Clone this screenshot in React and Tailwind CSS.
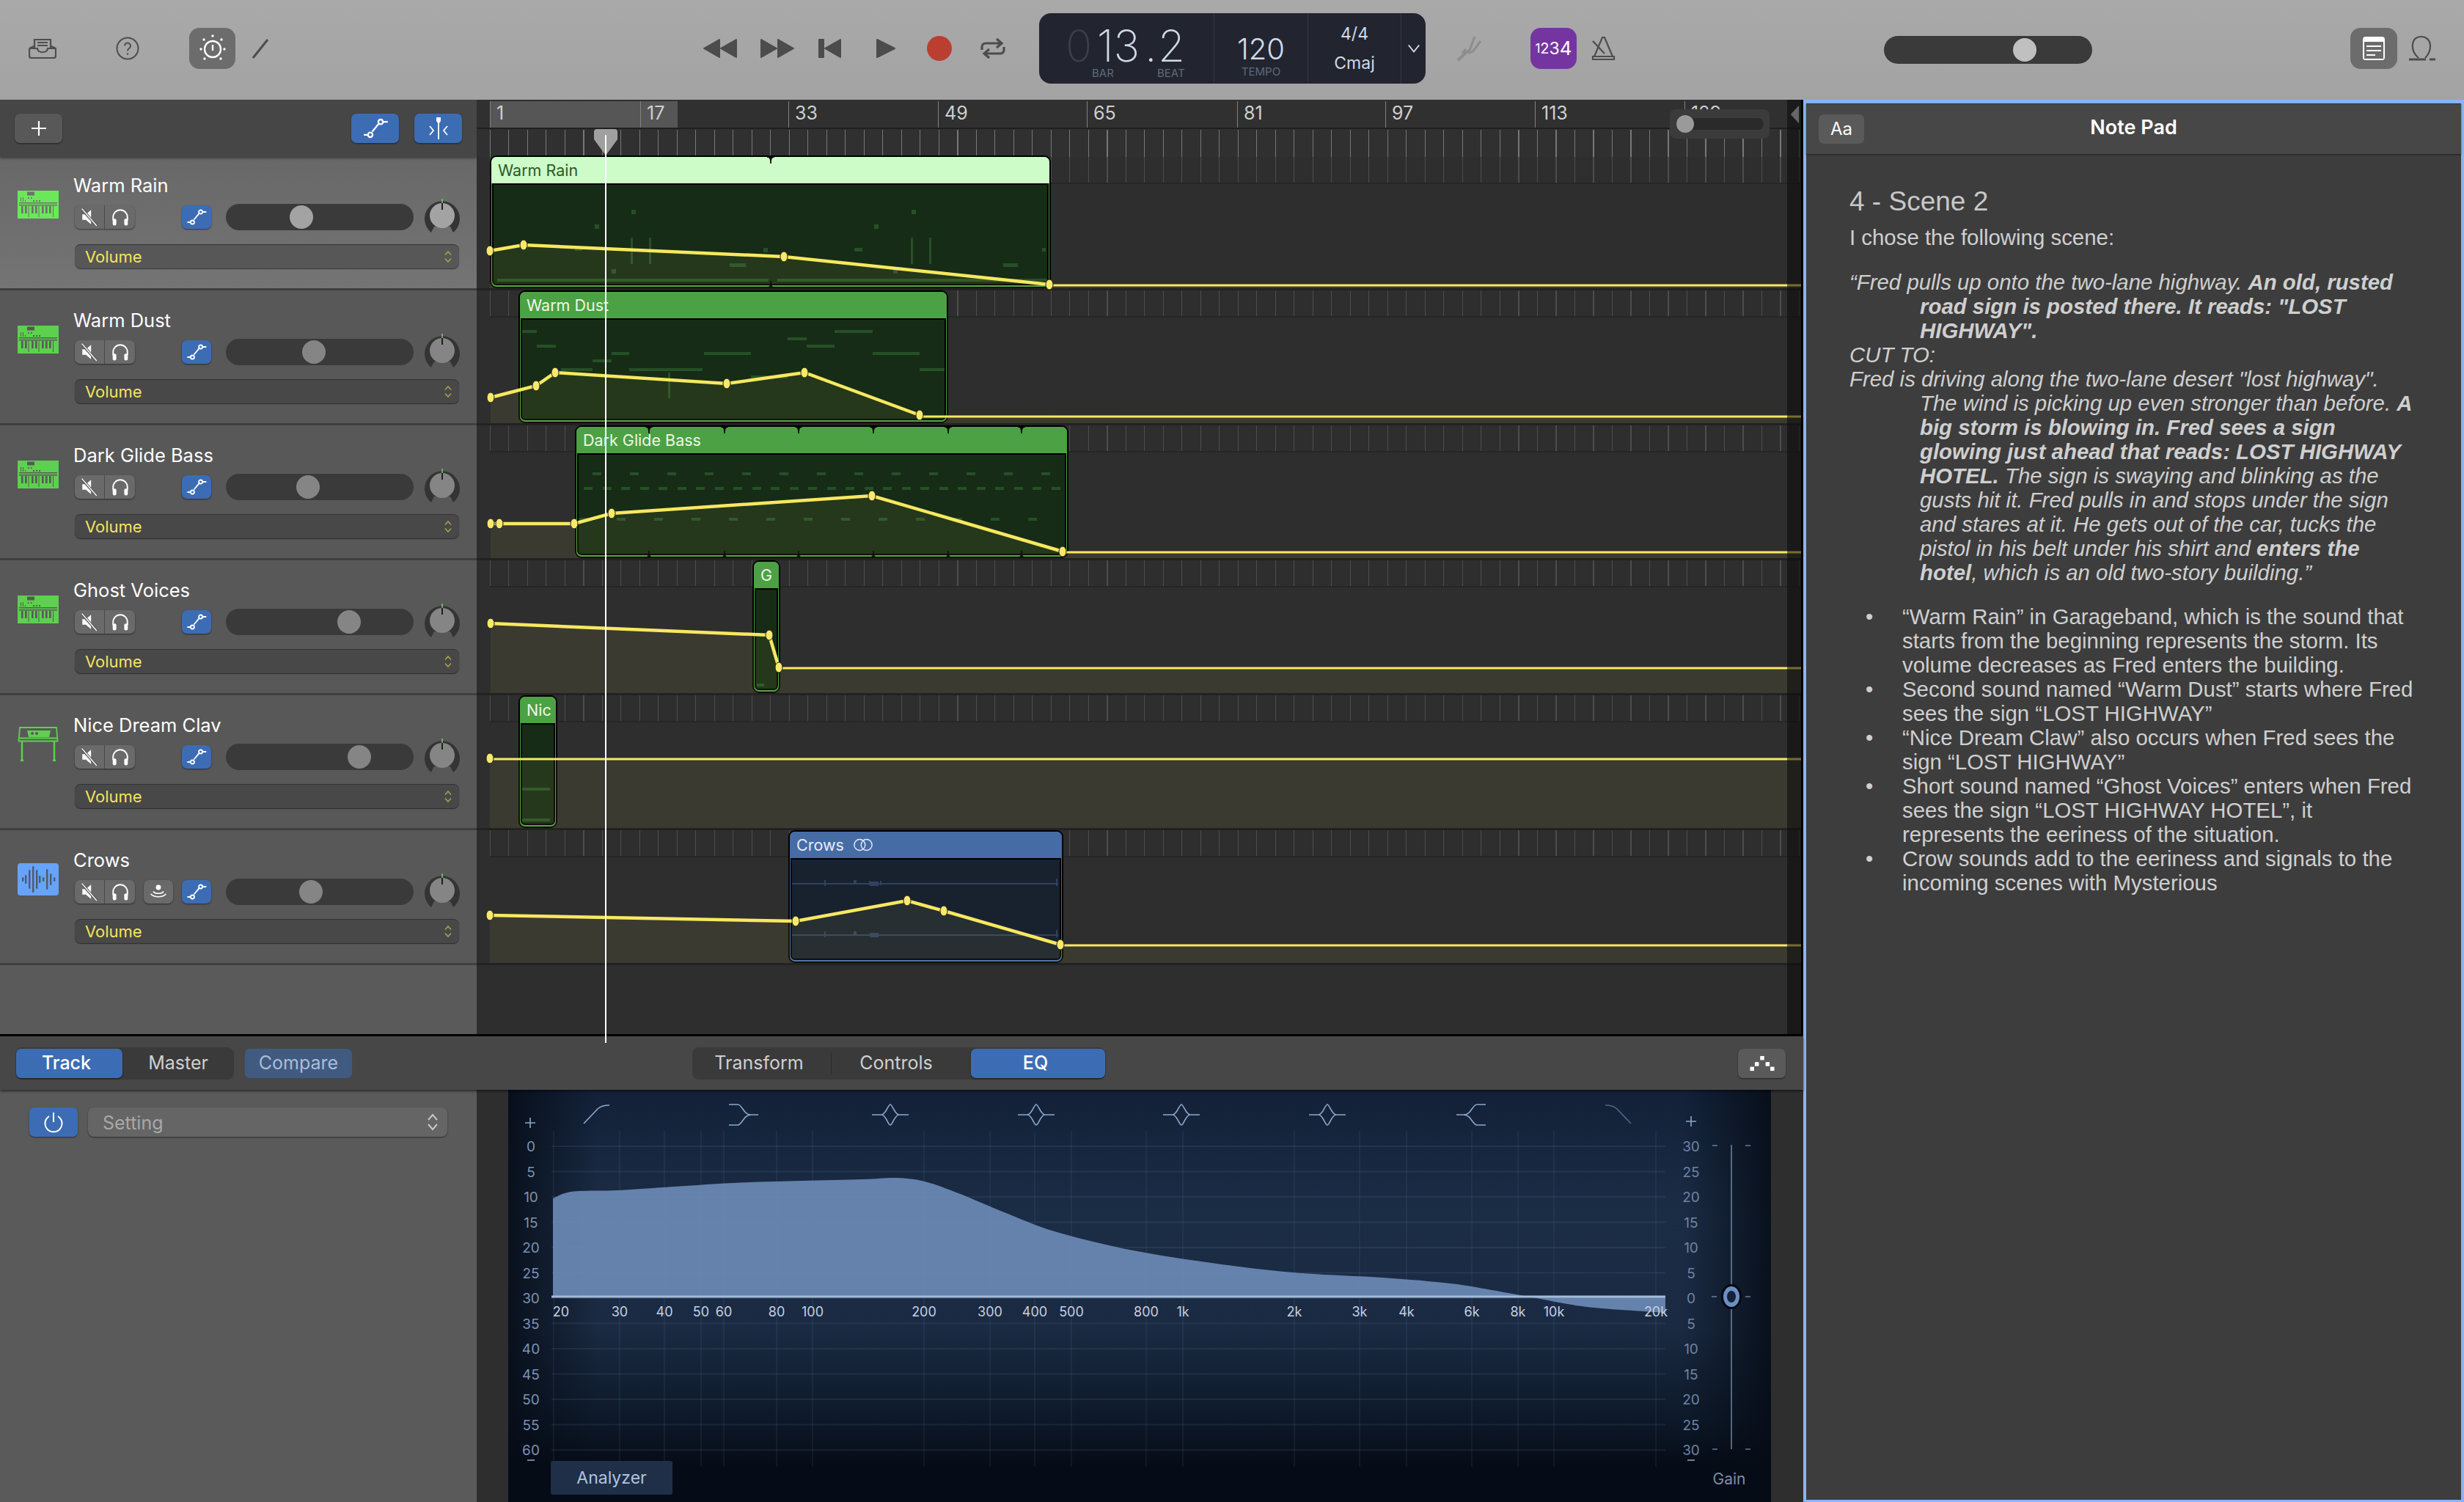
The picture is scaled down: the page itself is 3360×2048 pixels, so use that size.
import React from "react";

const SF = "[font-family:Inter,sans-serif]";
const ARIAL = "[font-family:'Liberation_Sans',Arial,sans-serif]";

/* ---------- icons ---------- */
const AutoIcon = ({ c = "w-[28px] h-[24px]" }) => (
  <svg viewBox="0 0 40 34" className={c} fill="none" stroke="#fff" strokeWidth="2.6">
    <path d="M2 27H9M15 22L25 10M31 7H39" />
    <circle cx="12" cy="27" r="3.6" />
    <circle cx="28" cy="7" r="3.6" />
  </svg>
);
const MuteIcon = () => (
  <svg viewBox="0 0 24 24" className="w-[26px] h-[26px]">
    <path d="M3 8.500h4.500L14 3v18l-6.500-5.500H3z" fill="#fff" />
    <path d="M3 2.500L21 23" stroke="#595959" strokeWidth="3.4" />
    <path d="M2.500 1.500L21 23" stroke="#fff" strokeWidth="1.3" />
  </svg>
);
const PhoneIcon = () => (
  <svg viewBox="0 0 24 24" className="w-[26px] h-[26px]" fill="none">
    <path d="M3 16v-4a9 9 0 0 1 18 0v4" stroke="#fff" strokeWidth="1.8" />
    <rect x="2.500" y="14" width="4.500" height="8.500" rx="2" fill="#fff" />
    <rect x="17" y="14" width="4.500" height="8.500" rx="2" fill="#fff" />
  </svg>
);
const MonitorIcon = () => (
  <svg viewBox="0 0 24 24" className="w-[26px] h-[26px]" fill="none" stroke="#fff" strokeWidth="1.5">
    <circle cx="12" cy="6.500" r="3.200" fill="#fff" stroke="none" />
    <path d="M5.500 11.500c2.500 3.500 10.500 3.500 13 0M2.500 14.500c4 5 15 5 19 0" />
  </svg>
);
const Synth = ({ bright }) => {
  const f = bright ? "#6be85a" : "#5ed04f";
  const d = bright ? "#6f6f6f" : "#585858";
  return (
    <svg viewBox="0 0 56 38" className="w-[56px] h-[38px]">
      <rect width="56" height="38" fill={f} />
      <rect x="13" y="1.500" width="10" height="5" fill={d} />
      <path d="M4 9h1v6H4zM7 9h1v6H7zM10 13h1v2h-1zM14 9h1.500v2H14zM18 9h1.500v2H18zM21 13h2v2h-2zM25 13h2v2h-2zM29 13h2v2h-2z" fill={d} />
      <rect x="2" y="16" width="52" height="1.500" fill={d} />
      <rect x="2" y="19" width="52" height="1.500" fill={d} />
      {[5, 10, 19, 24, 33, 38, 43].map((x) => (
        <rect key={x} x={x} y="21" width="2.600" height="10" fill={d} />
      ))}
      {[14.500, 28.500, 48].map((x) => (
        <rect key={x} x={x} y="21" width="1" height="15" fill={d} />
      ))}
    </svg>
  );
};
const Clav = () => (
  <svg viewBox="0 0 56 48" className="w-[56px] h-[48px] -mt-[6px]" fill="none" stroke="#5ed04f" strokeWidth="1.800">
    <path d="M1.500 20.500L3 2h50l1.500 18.500z" />
    <path d="M2 16.500h52" />
    <path d="M13 6h32l-2 9H15z" fill="#5ed04f" stroke="none" />
    <circle cx="20" cy="10" r="2" fill="#585858" stroke="none" />
    <circle cx="26" cy="10" r="2" fill="#585858" stroke="none" />
    <path d="M6 21v26M50 21v26M4 47h4M48 47h4" strokeWidth="2.400" />
  </svg>
);
const Wave = () => (
  <svg viewBox="0 0 56 44" className="w-[56px] h-[44px] -mt-[3px]">
    <rect width="56" height="44" rx="4" fill="#66a3fa" />
    {[[7, 3], [11, 6], [16, 13], [21, 18], [26, 13], [30, 5], [35, 3], [40, 14], [45, 8], [50, 3]].map(([x, h]) => (
      <rect key={x} x={x - 1} y={22 - h} width="2.400" height={h * 2} rx="1.200" fill="#4e5a6b" />
    ))}
  </svg>
);
const Knob = ({ fill }) => (
  <svg viewBox="0 0 50 56" className="w-[50px] h-[56px]">
    <path d="M10 49A24 24 0 1 1 40 49L36 41H14z" fill="#343434" />
    <circle cx="25" cy="26" r="17" fill={fill} />
    <path d="M25 3v6" stroke="#6fd66a" strokeWidth="1.500" />
    <path d="M25 9v9" stroke="#111" strokeWidth="1.800" />
  </svg>
);

/* ---------- data ---------- */
const tracks = [
  { name: "Warm Rain", thumb: 411, icon: "synth", sel: true },
  { name: "Warm Dust", thumb: 428, icon: "synth" },
  { name: "Dark Glide Bass", thumb: 420, icon: "synth" },
  { name: "Ghost Voices", thumb: 476, icon: "synth" },
  { name: "Nice Dream Clav", thumb: 490, icon: "clav" },
  { name: "Crows", thumb: 424, icon: "wave", audio: true },
];

const rulerBars = [
  ["1", 668], ["17", 873], ["33", 1075], ["49", 1279], ["65", 1482], ["81", 1687], ["97", 1889], ["113", 2093], ["129", 2297],
];

const range = (n, fn) => Array.from({ length: n }, (_, i) => fn(i));

const regions = [
  {
    name: "Warm Rain", x: 668, y: 212, w: 765, h: 181, sel: true,
    notes: [[861, 286, 6, 6], [811, 306, 6, 6], [784, 338, 10, 4], [860, 324, 3, 36], [885, 324, 3, 36], [834, 367, 6, 6], [995, 359, 22, 5], [1041, 338, 6, 6], [1243, 286, 6, 6], [1192, 306, 6, 6], [1165, 338, 11, 5], [1242, 324, 3, 36], [1267, 324, 3, 36], [1218, 367, 6, 6], [1368, 359, 20, 5], [1421, 338, 5, 5], [678, 380, 370, 4], [1060, 380, 368, 4]],
  },
  {
    name: "Warm Dust", x: 707, y: 396, w: 586, h: 181,
    notes: [[712, 450, 20, 4], [732, 470, 26, 4], [834, 480, 24, 4], [808, 490, 26, 4], [765, 502, 43, 4], [858, 502, 100, 4], [960, 480, 64, 4], [1074, 460, 26, 4], [1100, 470, 38, 4], [1138, 450, 52, 4], [1190, 480, 64, 4], [1254, 502, 34, 4], [1024, 512, 50, 4], [911, 508, 3, 35]],
  },
  {
    name: "Dark Glide Bass", x: 784, y: 580, w: 673, h: 181,
    notes: [
      ...range(13, (i) => [808 + i * 51, 644, 12, 4]),
      ...range(26, (i) => [796 + i * 25.500, 664, 12, 4]),
      ...range(13, (i) => [790 + i * 51, 706, 12, 4]),
    ],
  },
  { name: "G", x: 1026, y: 764, w: 38, h: 181, notes: [[1032, 932, 10, 4]] },
  { name: "Nic", x: 707, y: 948, w: 53, h: 181, notes: [[712, 1074, 38, 4], [712, 1116, 38, 4]] },
  {
    name: "Crows", x: 1075, y: 1132, w: 375, h: 181, audio: true,
    notes: [[1080, 1204, 363, 2], [1080, 1274, 363, 2], [1124, 1200, 2, 8], [1164, 1200, 4, 6], [1185, 1201, 2, 6], [1186, 1202, 12, 6], [1200, 1201, 2, 6], [1440, 1198, 2, 10], [1124, 1270, 2, 8], [1164, 1270, 4, 6], [1186, 1272, 12, 6], [1440, 1268, 2, 10]],
  },
];

const END = 2456;
const autos = [
  { bottom: 393, tail: 389, pts: [[668, 342], [714, 334], [1069, 350], [1431, 388]] },
  { bottom: 577, tail: 568, pts: [[669, 542], [731, 526], [757, 508], [991, 523], [1097, 508], [1254, 566]] },
  { bottom: 761, tail: 753, pts: [[669, 714], [681, 714], [783, 714], [834, 700], [1189, 676], [1449, 752]] },
  { bottom: 945, tail: 911, pts: [[669, 850], [1049, 866], [1062, 910]] },
  { bottom: 1129, tail: 1035, pts: [[668, 1034]] },
  { bottom: 1313, tail: 1289, pts: [[668, 1248], [1085, 1256], [1237, 1228], [1287, 1242], [1446, 1288]] },
];

const notches = [
  [1051, 214, 1], [1051, 392, -1],
  ...[885, 988, 1089, 1191, 1293, 1393].flatMap((x) => [[x, 582, 1], [x, 760, -1]]),
];

const freqs = [
  ["20", 755], ["30", 845], ["40", 906], ["50", 956], ["60", 987], ["80", 1059], ["100", 1108], ["200", 1260], ["300", 1350], ["400", 1411], ["500", 1461], ["800", 1563], ["1k", 1613], ["2k", 1765], ["3k", 1854], ["4k", 1918], ["6k", 2007], ["8k", 2070], ["10k", 2119], ["20k", 2258],
];

/* the EQ response, smoothed through its measured points */
const eqPts = [[754, 1634], [770, 1627], [790, 1624], [842, 1623], [905, 1619], [1000, 1613], [1093, 1610], [1177, 1608], [1223, 1606], [1261, 1611], [1307, 1627], [1372, 1654], [1438, 1679], [1540, 1704], [1652, 1722], [1763, 1735], [1885, 1742], [1978, 1750], [2034, 1759], [2085, 1768], [2164, 1782], [2271, 1790]];
function smoothArea(pts, base) {
  let d = `M${pts[0][0]} ${pts[0][1]}`;
  for (let i = 0; i < pts.length - 1; i++) {
    const p0 = pts[Math.max(0, i - 1)];
    const p1 = pts[i];
    const p2 = pts[i + 1];
    const p3 = pts[Math.min(pts.length - 1, i + 2)];
    const c1x = p1[0] + (p2[0] - p0[0]) / 6;
    const c1y = p1[1] + (p2[1] - p0[1]) / 6;
    const c2x = p2[0] - (p3[0] - p1[0]) / 6;
    const c2y = p2[1] - (p3[1] - p1[1]) / 6;
    d += `C${c1x} ${c1y} ${c2x} ${c2y} ${p2[0]} ${p2[1]}`;
  }
  return d + `V${base}H${pts[0][0]}Z`;
}
const eqCurve = smoothArea(eqPts, 1768);

/* ---------- pieces ---------- */
function TrackRow({ t, i }) {
  const rowBg = t.sel ? "bg-[linear-gradient(to_bottom,#686868,#747474)]" : "bg-[#585858]";
  return (
    <div className={`${rowBg} ${i === 0 ? "h-[182px] pt-[23px]" : "h-[184px] pt-[25px]"} border-b-[3px] border-[#3f3f3f] flex`}>
      <div className="w-[100px] pl-[24px] pt-[23px] shrink-0">
        {t.icon === "synth" && <Synth bright={t.sel} />}
        {t.icon === "clav" && <Clav />}
        {t.icon === "wave" && <Wave />}
      </div>
      <div className="w-[526px]">
        <div className={`h-[32px] leading-[32px] text-[25.5px] text-white ${SF}`}>{t.name}</div>
        <div className="h-[32px] mt-[11px] pl-[2px] flex items-center">
          <div className="w-[82px] h-[32px] shrink-0 flex rounded-[7px] bg-[#6a6a6a] shadow-[0_1px_2px_rgba(0,0,0,.5)] overflow-hidden">
            <div className="w-[41px] flex items-center justify-center border-r border-[#4a4a4a]"><MuteIcon /></div>
            <div className="w-[41px] flex items-center justify-center"><PhoneIcon /></div>
          </div>
          {t.audio ? (
            <div className="ml-[12px] w-[40px] h-[32px] shrink-0 rounded-[7px] bg-[#6a6a6a] flex items-center justify-center shadow-[0_1px_2px_rgba(0,0,0,.5)]"><MonitorIcon /></div>
          ) : (
            <div className="ml-[12px] w-[40px] shrink-0" />
          )}
          <div className="ml-[12px] w-[40px] h-[32px] shrink-0 rounded-[7px] bg-[#3c6db4] flex items-center justify-center shadow-[0_1px_2px_rgba(0,0,0,.5)]"><AutoIcon /></div>
          <div className="relative ml-[20px] w-[256px] h-[36px] shrink-0 rounded-full bg-[#3a3a3a]">
            <div
              className={`absolute top-[2px] w-[32px] h-[32px] rounded-full ${t.sel ? "bg-[#a3a3a3]" : "bg-[#858585]"}`}
              style={{ left: t.thumb - 308 - 16 }}
            />
          </div>
          <div className="ml-[14px] -mt-[1px] shrink-0"><Knob fill={t.sel ? "#a3a3a3" : "#858585"} /></div>
        </div>
        <div className={`mt-[21px] ml-[2px] h-[33px] rounded-[8px] ${t.sel ? "bg-[#575757]" : "bg-[#484848]"} border-t border-[#333] shadow-[0_1px_1px_rgba(0,0,0,.5)] flex items-center justify-between pl-[14px] pr-[10px]`}>
          <span className={`text-[22px] text-[#f5e35f] ${SF}`}>Volume</span>
          <svg viewBox="0 0 10 18" className="w-[10px] h-[18px]" fill="none" stroke="#a99f4e" strokeWidth="1.600">
            <path d="M1 6.500L5 2l4 4.500M1 11.500L5 16l4-4.500" />
          </svg>
        </div>
      </div>
    </div>
  );
}

function Region({ r }) {
  const hdr = r.sel ? "bg-[#cdfcc8] text-[#2c5a28]" : r.audio ? "bg-[#466ca5] text-[#e6eef8]" : "bg-[#4ca144] text-[#ecf7e8]";
  const outer = r.audio ? "bg-[#466ca5]" : "bg-[#4ca144]";
  const body = r.audio ? "bg-[#18222f]" : "bg-[#162c16]";
  const note = r.audio ? "bg-[#2f4260]" : "bg-[#265027]";
  return (
    <div
      className={`absolute rounded-[9px] border-2 border-black overflow-hidden flex flex-col ${outer}`}
      style={{ left: r.x - 650, top: r.y - 136, width: r.w, height: r.h }}
    >
      <div className={`h-[36px] shrink-0 flex items-center pl-[9px] gap-[12px] text-[21.5px] whitespace-nowrap overflow-hidden ${SF} ${hdr}`}>
        {r.name}
        {r.audio && (
          <svg viewBox="0 0 30 18" className="w-[28px] h-[18px]" fill="none" stroke="#e6eef8" strokeWidth="1.500">
            <circle cx="10" cy="9" r="8" />
            <circle cx="20" cy="9" r="8" />
          </svg>
        )}
      </div>
      <div className={`flex-1 mx-[1px] mb-[2px] border-2 border-black rounded-b-[6px] ${body}`} />
      {r.notes.map(([x, y, w, h], i) => (
        <div key={i} className={`absolute ${note}`} style={{ left: x - r.x - 2, top: y - r.y - 2, width: w, height: h }} />
      ))}
    </div>
  );
}

function Segment({ children, active, w, pr }) {
  return (
    <div className={`${w} ${pr} h-[40px] rounded-[7px] flex items-center justify-center text-[25px] ${SF} ${active ? "bg-[#3c6db4] text-white font-medium shadow-[0_1px_2px_rgba(0,0,0,.6)]" : "text-[#cfcfcf]"}`}>
      {children}
    </div>
  );
}

function TopBar() {
  return (
    <div className="h-[136px] shrink-0 pb-[4px] bg-[linear-gradient(to_bottom,#a9a9a9,#a3a3a3)] flex items-center">
      <svg viewBox="0 0 38 28" className="ml-[39px] w-[38px] h-[28px] shrink-0" fill="none" stroke="#4d4d4d" strokeWidth="2.200">
        <path d="M1 14v10a3 3 0 0 0 3 3h30a3 3 0 0 0 3-3V14l-6-3M1 14l6-3M1 14h11c0 7 14 7 14 0h11" />
        <path d="M8 14V2h22v12M12 6h14M12 10h14" />
      </svg>
      <svg viewBox="0 0 32 32" className="ml-[81px] w-[32px] h-[32px] shrink-0" fill="none" stroke="#4d4d4d" strokeWidth="2">
        <circle cx="16" cy="16" r="14.500" />
        <path d="M12 12.500a4 4 0 1 1 6 3.500c-1.500 1-2 1.500-2 3.500" />
        <circle cx="16" cy="23.500" r="1.200" fill="#4d4d4d" stroke="none" />
      </svg>
      <div className="ml-[68px] w-[63px] h-[56px] rounded-[14px] bg-[#6c6c6c] flex items-center justify-center shrink-0">
        <svg viewBox="0 0 40 40" className="w-[40px] h-[40px]" fill="none" stroke="#fff" strokeWidth="2.400">
          <circle cx="20" cy="21" r="11" />
          <path d="M20 15v8" />
          {[[20, 3], [8, 8], [32, 8], [4, 21], [36, 21], [9, 34], [31, 34]].map(([x, y]) => (
            <circle key={x + "-" + y} cx={x} cy={y} r="1.700" fill="#fff" stroke="none" />
          ))}
        </svg>
      </div>
      <svg viewBox="0 0 26 28" className="ml-[21px] w-[26px] h-[28px] shrink-0" fill="none" stroke="#4d4d4d" strokeWidth="3">
        <path d="M3 27L23 2" />
      </svg>
      <svg viewBox="0 0 46 28" className="ml-[591px] w-[46px] h-[28px] shrink-0" fill="#4c4c4c" stroke="#4c4c4c" strokeWidth="2" strokeLinejoin="round">
        <path d="M1 14L22 2v24zM24 14L45 2v24z" />
      </svg>
      <svg viewBox="0 0 46 28" className="ml-[32px] w-[46px] h-[28px] shrink-0" fill="#4c4c4c" stroke="#4c4c4c" strokeWidth="2" strokeLinejoin="round">
        <path d="M1 2l21 12L1 26zM24 2l21 12-21 12z" />
      </svg>
      <svg viewBox="0 0 32 28" className="ml-[32px] w-[32px] h-[28px] shrink-0" fill="#4c4c4c" stroke="#4c4c4c" strokeWidth="2" strokeLinejoin="round">
        <path d="M2 2h6v24H2zM31 2v24L10 14z" />
      </svg>
      <svg viewBox="0 0 26 28" className="ml-[48px] w-[26px] h-[28px] shrink-0" fill="#4c4c4c" stroke="#4c4c4c" strokeWidth="2" strokeLinejoin="round">
        <path d="M1 2l24 12L1 26z" />
      </svg>
      <div className="ml-[43px] w-[34px] h-[34px] rounded-full bg-[#ba3f31] shrink-0" />
      <svg viewBox="0 0 36 30" className="ml-[38px] w-[36px] h-[30px] shrink-0" fill="none" stroke="#4c4c4c" strokeWidth="3.200">
        <path d="M3 17v-4a5 5 0 0 1 5-5h20M23 2l7 6-7 6M33 13v4a5 5 0 0 1-5 5H8M13 16l-7 6 7 6" />
      </svg>
      <div className={`ml-[45px] w-[527px] h-[96px] rounded-[16px] bg-[#222530] flex shrink-0 ${SF}`}>
        <div className="w-[239px] border-r border-[#343845] flex flex-col">
          <div className="h-[72px] pt-[16px] pl-[36px] flex items-center text-[60px] font-extralight leading-none text-[#d0d9e8]">
            <span className="w-[36px] text-[#3b3f4c]">0</span>
            <span className="w-[72px] text-center">13</span>
            <span className="w-[18px]">.</span>
            <span className="w-[36px] text-center">2</span>
          </div>
          <div className="flex pl-[72px] text-[15px] leading-[20px] text-[#5f6979]">
            <span className="w-[89px]">BAR</span>
            <span>BEAT</span>
          </div>
        </div>
        <div className="w-[128px] border-r border-[#343845] flex flex-col items-center justify-end pb-[6px] text-[#d0d9e8]">
          <span className="text-[40px] leading-[42px] font-light">120</span>
          <span className="text-[15px] leading-[20px] text-[#5f6979]">TEMPO</span>
        </div>
        <div className="w-[127px] border-r border-[#343845] flex flex-col items-center justify-center gap-[10px] text-[23px] leading-[30px] text-[#d0d9e8]">
          <span>4/4</span>
          <span>Cmaj</span>
        </div>
        <div className="flex-1 flex items-center justify-center">
          <svg viewBox="0 0 20 14" className="w-[18px] h-[14px]" fill="none" stroke="#d0d9e8" strokeWidth="2.200"><path d="M2 2l8 10 8-10" /></svg>
        </div>
      </div>
      <svg viewBox="0 0 40 36" className="ml-[39px] w-[40px] h-[36px] shrink-0" fill="none" stroke="#8d8d8d" strokeWidth="3">
        <path d="M28 2l-6 16c-1 3-3 4-6 5l-3 1-1-1 4-4M36 8l-9 12c-2 3-6 4-9 4" />
        <path d="M16 24L5 34" strokeWidth="4" />
      </svg>
      <div className={`ml-[64px] w-[63px] h-[56px] rounded-[14px] bg-[#7535a0] flex items-center justify-center text-white leading-none shrink-0 ${SF}`}>
        <span className="text-[17px]">1</span>
        <span className="text-[20px]">2</span>
        <span className="text-[23px]">3</span>
        <span className="text-[26px]">4</span>
      </div>
      <svg viewBox="0 0 33 34" className="ml-[20px] w-[33px] h-[34px] shrink-0" fill="none" stroke="#4d4d4d" strokeWidth="2.200">
        <path d="M15 2h3l11 26H4zM2 28h29v4H2zM2 7l16 17" />
      </svg>
      <div className="relative ml-[366px] mt-[4px] w-[284px] h-[38px] rounded-full bg-[#3a3a3a] shrink-0">
        <div className="absolute left-[176px] top-[3px] w-[32px] h-[32px] rounded-full bg-[#c0c0c0]" />
      </div>
      <div className="ml-[352px] w-[64px] h-[56px] rounded-[14px] bg-[#6c6c6c] flex items-center justify-center shrink-0">
        <svg viewBox="0 0 32 36" className="w-[32px] h-[36px]">
          <rect x="1" y="2" width="30" height="32" rx="4" fill="#fff" />
          <rect x="3" y="9" width="26" height="23" fill="#6c6c6c" />
          <path d="M6 15h20M6 21h20M6 27h12" stroke="#fff" strokeWidth="2" />
        </svg>
      </div>
      <svg viewBox="0 0 38 36" className="ml-[15px] w-[38px] h-[36px] shrink-0" fill="none" stroke="#4d4d4d" strokeWidth="2.200">
        <path d="M14 31C8 26 5 20 6 12 7 5 12 2 18 2s12 4 12 13c0 7-3 12-7 16" />
        <path d="M1 33h23" strokeWidth="3" />
        <path d="M29 33h8" strokeWidth="3" />
      </svg>
    </div>
  );
}

function Timeline() {
  return (
    <div className="relative w-[1806px] h-[1274px] bg-[#2e2e2e] overflow-hidden">
      {/* ruler */}
      <div className="relative h-[78px] bg-[#303030]">
        <div className="absolute left-[18px] top-[2px] w-[256px] h-[36px] bg-[#565656]" />
        <div className="absolute left-0 right-0 top-[38px] h-[2px] bg-[#202020]" />
        <div className="absolute left-[18px] right-0 top-[41px] bottom-0 bg-[repeating-linear-gradient(to_right,#777_0,#777_1px,transparent_1px,transparent_25.5px)]" />
        {rulerBars.map(([label, x]) => (
          <div
            key={label}
            className={`absolute top-[2px] h-[36px] pl-[8px] border-l border-[#808080] text-[25px] leading-[32px] text-[#cfcfcf] ${SF}`}
            style={{ left: x - 650 }}
          >
            {label}
          </div>
        ))}
        <div className="absolute left-[1627px] top-[13px] w-[136px] h-[40px] rounded-[8px] bg-[#3b3b3b] flex items-center pl-[10px]">
          <div className="relative w-[118px] h-[16px] rounded-full bg-[#2a2a2a]">
            <div className="absolute -left-[1px] -top-[4px] w-[24px] h-[24px] rounded-full bg-[#9a9a9a]" />
          </div>
        </div>
      </div>
      {/* lanes */}
      {tracks.map((t, i) => (
        <div key={t.name} className={`${i === 0 ? "h-[182px]" : "h-[184px]"} border-b-[3px] border-[#222]`}>
          <div className="h-[37px] ml-[18px] border-b-2 border-[#262626] bg-[repeating-linear-gradient(to_right,#4d4d4d_0,#4d4d4d_1px,transparent_1px,transparent_25.5px)]" />
        </div>
      ))}
      {/* regions on the arrangement canvas */}
      {regions.map((r) => <Region key={r.name} r={r} />)}
      {/* automation curves */}
      <svg viewBox="650 136 1806 1274" className="absolute left-0 top-0 w-[1806px] h-[1274px] pointer-events-none">
        {notches.map(([x, y, d], i) => (
          <path key={i} d={`M${x - 5} ${y}Q${x} ${y} ${x} ${y + 9 * d}Q${x} ${y} ${x + 5} ${y}z`} fill="#000" stroke="#000" />
        ))}
        {autos.map((a, i) => {
          const first = a.pts[0];
          const last = a.pts[a.pts.length - 1];
          const line = a.pts.map((p) => p.join(",")).join(" ");
          return (
            <g key={i}>
              <polygon
                points={`${first[0]},${a.bottom} ${line} ${END},${a.tail} ${END},${a.bottom}`}
                fill="#f5e35f"
                fillOpacity="0.07"
              />
              <path d={`M${last[0]} ${a.tail}H${END}`} stroke="#f8e860" strokeWidth="3" />
              <polyline points={line} fill="none" stroke="#f8e860" strokeWidth="4.500" />
              {a.pts.map(([x, y]) => (
                <ellipse key={x} cx={x} cy={y} rx="5" ry="7" fill="#f8e96a" stroke="#222" strokeWidth="1" />
              ))}
            </g>
          );
        })}
      </svg>
      {/* dark strip lying over the end of the lanes */}
      <div className="absolute right-0 top-0 bottom-0 w-[19px] bg-[rgba(10,10,10,.55)] flex justify-center pt-[4px]">
        <svg viewBox="0 0 16 32" className="w-[14px] h-[32px]"><path d="M15 2v28L2 16z" fill="#666" /></svg>
      </div>
    </div>
  );
}

function EqPanel() {
  const levels = range(13, (i) => 1563 + i * 34.5);
  const leftLabels = range(13, (i) => String(i * 5));
  const rightLabels = ["30", "25", "20", "15", "10", "5", "0", "5", "10", "15", "20", "25", "30"];
  const txt = { fontFamily: "Inter, sans-serif" };
  return (
    <div className="relative w-[1722px] h-full bg-[linear-gradient(to_right,rgba(6,12,22,.85),transparent_7%,transparent_93%,rgba(6,12,22,.85)),linear-gradient(to_bottom,#122138_0%,#1b2c45_30%,#1a2a42_58%,#0d1929_80%,#060c17_91%)]">
      <svg viewBox="693 1486 1722 562" className="absolute inset-0 w-[1722px] h-[562px]">
        {freqs.map(([f, x]) => (
          <path key={f} d={`M${x} 1542V2000`} stroke="#8cb0dc" strokeOpacity="0.1" strokeWidth="1.500" />
        ))}
        {levels.map((y) => (
          <path key={y} d={`M752 ${y}H2271`} stroke="#8cb0dc" strokeOpacity="0.1" strokeWidth="2" />
        ))}
        <path d={eqCurve} fill="#6a8ab5" fillOpacity="0.92" />
        <path d="M752 1768H2271" stroke="#a4bbd8" strokeWidth="3" />
        {levels.map((y, i) => (
          <text key={i} x="724" y={y + 7} textAnchor="middle" fontSize="19" fill="#7d92b2" style={txt}>{leftLabels[i]}</text>
        ))}
        {levels.map((y, i) => (
          <text key={i} x="2306" y={y + 7} textAnchor="middle" fontSize="19" fill="#6f84a4" style={txt}>{rightLabels[i]}</text>
        ))}
        {freqs.map(([f, x]) => (
          <text key={f} x={f === "20" ? 765 : x} y="1795" textAnchor="middle" fontSize="18" fill="#c5d0e0" style={txt}>{f}</text>
        ))}
        <g fill="none" stroke="#8ea8cc" strokeWidth="1.600">
          <path d="M723 1524v14M716 1531h14M719 1991h10M2306 1522v14M2299 1529h14M2301 1991h10" />
          <path d="M796 1532L815 1512Q820 1507 831 1507" />
          <path d="M2189 1507Q2200 1507 2205 1512L2224 1532" strokeOpacity="0.5" />
          <g transform="translate(1014 1520)"><path d="M-20-14H-8C-2-14 0 0 10 0H20M-20 14H-8C-2 14 0 0 10 0" /></g>
          <g transform="translate(2006 1520)"><path d="M20-14H8C2-14 0 0-10 0H-20M20 14H8C2 14 0 0-10 0" /></g>
          {[1214, 1413, 1611, 1810].map((x) => (
            <g key={x} transform={`translate(${x} 1520)`}>
              <path d="M-25 0H-12C-6 0-3-14 0-14 3-14 6 0 12 0H25M-12 0C-6 0-3 14 0 14 3 14 6 0 12 0" />
            </g>
          ))}
          <path d="M2361 1561V1976M2335 1562h7M2380 1562h7M2335 1976h7M2380 1976h7M2334 1768h7M2380 1768h7" strokeOpacity="0.7" />
        </g>
        <ellipse cx="2361" cy="1768" rx="14" ry="17" fill="#05090f" />
        <ellipse cx="2361" cy="1768" rx="11" ry="14" fill="#6c90c4" />
        <ellipse cx="2361" cy="1768" rx="6" ry="8" fill="#15233a" />
        <text x="2358" y="2024" textAnchor="middle" fontSize="21" fill="#7a8ca8" style={txt}>Gain</text>
      </svg>
      <div className={`absolute left-[58px] top-[506px] w-[166px] h-[46px] rounded-[3px] bg-[#1f2f47] flex items-center justify-center text-[23px] text-[#aec4e2] ${SF}`}>
        Analyzer
      </div>
    </div>
  );
}

function Inspector() {
  return (
    <>
      <div className="h-[3px] bg-black shrink-0" />
      <div className="relative h-[73px] shrink-0 bg-[#474747] flex items-center shadow-[0_2px_3px_rgba(0,0,0,.5)] z-10">
        <div className="ml-[22px] w-[297px] h-[44px] rounded-[9px] bg-[#3a3a3a] flex items-center">
          <Segment active w="w-[145px]" pr="pr-[8px]">Track</Segment>
          <Segment w="w-[152px]">Master</Segment>
        </div>
        <div className={`ml-[15px] w-[146px] h-[40px] rounded-[7px] bg-[#415a80] flex items-center justify-center text-[25px] text-[#a9bdd8] ${SF}`}>Compare</div>
        <div className="ml-[464px] w-[563px] h-[44px] rounded-[9px] bg-[#3a3a3a] flex items-center">
          <Segment w="w-[189px]" pr="pr-[7px]">Transform</Segment>
          <div className="w-px h-[30px] bg-[#2c2c2c]" />
          <Segment w="w-[190px]" pr="pr-[14px]">Controls</Segment>
          <Segment active w="w-[183px]" pr="pr-[7px]">EQ</Segment>
        </div>
        <div className="ml-[863px] w-[65px] h-[40px] rounded-[7px] bg-[#5a5a5a] flex items-center justify-center shadow-[0_1px_2px_rgba(0,0,0,.5)]">
          <svg viewBox="0 0 40 24" className="w-[38px] h-[22px]" fill="#fff">
            <rect x="17" y="1" width="6" height="6" />
            <rect x="9" y="10" width="6" height="6" />
            <rect x="25" y="10" width="6" height="6" />
            <rect x="2" y="17" width="6" height="6" />
            <rect x="32" y="17" width="6" height="6" />
          </svg>
        </div>
      </div>
      <div className="flex flex-1 min-h-0">
        <div className="w-[650px] bg-[#5a5a5a] pt-[24px] pl-[40px] flex items-start gap-[14px]">
          <div className="w-[66px] h-[40px] rounded-[7px] bg-[#3c6db4] flex items-center justify-center shadow-[0_1px_2px_rgba(0,0,0,.5)]">
            <svg viewBox="0 0 28 30" className="w-[28px] h-[30px]" fill="none" stroke="#fff" strokeWidth="2">
              <path d="M14 2v13M8 7a11.500 11.500 0 1 0 12 0" />
            </svg>
          </div>
          <div className="w-[490px] h-[40px] rounded-[8px] bg-[#656565] flex items-center justify-between pl-[20px] pr-[13px] shadow-[0_1px_2px_rgba(0,0,0,.5)]">
            <span className={`text-[25px] leading-[34px] pt-[2px] text-[#a8a8a8] ${SF}`}>Setting</span>
            <svg viewBox="0 0 14 24" className="w-[14px] h-[24px]" fill="none" stroke="#c8c8c8" strokeWidth="2">
              <path d="M1 9l6-7 6 7M1 15l6 7 6-7" />
            </svg>
          </div>
        </div>
        <div className="w-[43px] bg-[#2e2e2e]" />
        <EqPanel />
        <div className="w-[44px] bg-[#2e2e2e]" />
      </div>
    </>
  );
}

const quote = [
  { t: [["“Fred pulls up onto the two-lane highway. ", 0], ["An old, rusted", 1]] },
  { t: [["road sign is posted there. It reads: \"LOST", 1]], ind: true },
  { t: [["HIGHWAY\".", 1]], ind: true },
  { t: [["CUT TO:", 0]] },
  { t: [["Fred is driving along the two-lane desert \"lost highway\".", 0]] },
  { t: [["The wind is picking up even stronger than before. ", 0], ["A", 1]], ind: true },
  { t: [["big storm is blowing in. Fred sees a sign", 1]], ind: true },
  { t: [["glowing just ahead that reads: LOST HIGHWAY", 1]], ind: true },
  { t: [["HOTEL.", 1], [" The sign is swaying and blinking as the", 0]], ind: true },
  { t: [["gusts hit it. Fred pulls in and stops under the sign", 0]], ind: true },
  { t: [["and stares at it. He gets out of the car, tucks the", 0]], ind: true },
  { t: [["pistol in his belt under his shirt and ", 0], ["enters the", 1]], ind: true },
  { t: [["hotel", 1], [", which is an old two-story building.”", 0]], ind: true },
];

const bullets = [
  ["“Warm Rain” in Garageband, which is the sound that", "starts from the beginning represents the storm. Its", "volume decreases as Fred enters the building."],
  ["Second sound named “Warm Dust” starts where Fred", "sees the sign “LOST HIGHWAY”"],
  ["“Nice Dream Claw” also occurs when Fred sees the", "sign “LOST HIGHWAY”"],
  ["Short sound named “Ghost Voices” enters when Fred", "sees the sign “LOST HIGHWAY HOTEL”, it", "represents the eeriness of the situation."],
  ["Crow sounds add to the eeriness and signals to the", "incoming scenes with Mysterious"],
];

function NotePad() {
  return (
    <div className="w-[901px] shrink-0 bg-black flex flex-col">
      <div className="flex-1 border-[4px] border-t-[5px] border-b-[3px] border-[#8ab4f5] bg-[#3d3d3d] flex flex-col min-h-0">
        <div className="h-[69px] shrink-0 bg-[#474747] grid grid-cols-[1fr_auto_1fr] items-center shadow-[0_1px_2px_rgba(0,0,0,.5)] border-t border-[#333]">
          <div className={`ml-[17px] w-[62px] h-[40px] rounded-[7px] bg-[#5a5a5a] flex items-center justify-center text-[24px] text-white ${SF}`}>Aa</div>
          <div className={`pb-[3px] text-[27px] font-semibold text-white ${SF}`}>Note Pad</div>
          <div />
        </div>
        <div className={`pl-[59px] pt-[43px] text-[29.4px] leading-[33px] text-[#cfcfcf] whitespace-nowrap ${ARIAL}`}>
          <div className="text-[37px] leading-[44px] text-[#c8c8c8]">4 - Scene 2</div>
          <div className="mt-[10px]">I chose the following scene:</div>
          <div className="mt-[28px] italic">
            {quote.map((l, i) => (
              <div key={i} className={l.ind ? "pl-[96px]" : ""}>
                {l.t.map(([s, b], j) => (
                  <span key={j} className={b ? "font-bold" : ""}>{s}</span>
                ))}
              </div>
            ))}
          </div>
          <ul className="mt-[27px]">
            {bullets.map((b, i) => (
              <li key={i} className="flex">
                <span className="w-[72px] pl-[22px] shrink-0">•</span>
                <span>
                  {b.map((l) => (
                    <span key={l} className="block">{l}</span>
                  ))}
                </span>
              </li>
            ))}
          </ul>
        </div>
      </div>
    </div>
  );
}

export default function App() {
  return (
    <div className="w-[3360px] h-[2048px] flex flex-col overflow-hidden bg-black">
      <TopBar />
      <div className="flex flex-1 min-h-0">
        <div className="relative w-[2459px] shrink-0 flex flex-col">
          <div className="h-[1274px] shrink-0 flex">
            <div className="w-[650px] shrink-0 bg-[#5a5a5a]">
              <div className="h-[78px] bg-[#464646] flex items-center pl-[20px] pr-[20px] shadow-[0_2px_3px_rgba(0,0,0,.4)] relative">
                <div className="w-[65px] h-[40px] rounded-[7px] bg-[#585858] flex items-center justify-center shadow-[0_1px_2px_rgba(0,0,0,.5)]">
                  <svg viewBox="0 0 24 24" className="w-[24px] h-[24px]" stroke="#fff" strokeWidth="2.200"><path d="M12 2v20M2 12h20" /></svg>
                </div>
                <div className="ml-auto w-[65px] h-[40px] rounded-[7px] bg-[#3c6db4] flex items-center justify-center shadow-[0_1px_2px_rgba(0,0,0,.5)]"><AutoIcon c="w-[36px] h-[30px]" /></div>
                <div className="ml-[21px] w-[65px] h-[40px] rounded-[7px] bg-[#3c6db4] flex items-center justify-center shadow-[0_1px_2px_rgba(0,0,0,.5)]">
                  <svg viewBox="0 0 30 32" className="w-[30px] h-[32px]" fill="none" stroke="#fff" strokeWidth="1.800">
                    <path d="M15 8v23M3 13l5 6-5 6M27 13l-5 6 5 6" />
                    <path d="M12 1h6v5l-3 4-3-4z" fill="#fff" stroke="none" />
                  </svg>
                </div>
              </div>
              {tracks.map((t, i) => <TrackRow key={t.name} t={t} i={i} />)}
            </div>
            <Timeline />
            <div className="w-[3px] shrink-0 bg-black" />
          </div>
          <Inspector />
          {/* playhead, over the arrangement */}
          <div className="absolute left-[825px] top-[48px] w-[2px] h-[1238px] bg-white z-20" />
          <svg viewBox="0 0 34 36" className="absolute left-[809px] top-[40px] w-[34px] h-[36px] z-10">
            <path d="M1 4a4 4 0 0 1 4-4h24a4 4 0 0 1 4 4v10L17 36 1 14z" fill="#a0a0a0" />
          </svg>
        </div>
        <NotePad />
      </div>
    </div>
  );
}
